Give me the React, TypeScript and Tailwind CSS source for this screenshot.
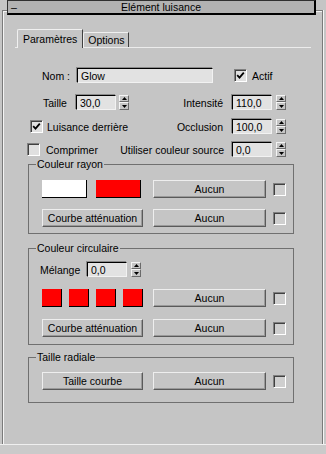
import React from 'react';

type Cls = { className?: string };

function Field({ value, className = '' }: { value: string } & Cls) {
    return (
        <div
            className={`h-[15px] shrink-0 pl-[3px] flex items-center bg-[#e2e2e2] border border-t-black border-l-black border-r-[#f2f2f2] border-b-[#f2f2f2] shadow-[-1px_-1px_0_#8a8a8a] ${className}`}
        >
            {value}
        </div>
    );
}

function Spinner({ className = '' }: Cls) {
    return (
        <div className={`w-[10px] h-[15px] shrink-0 flex flex-col ${className}`}>
            <div className="h-[7px] flex items-center justify-center border border-t-[#f4f4f4] border-l-[#f4f4f4] border-r-[#6a6a6a] border-b-[#6a6a6a]">
                <svg width="5" height="3" viewBox="0 0 5 3">
                    <polygon points="2.5,0 5,3 0,3" fill="#000" />
                </svg>
            </div>
            <div className="h-[8px] flex items-center justify-center border border-t-[#f4f4f4] border-l-[#f4f4f4] border-r-[#6a6a6a] border-b-[#6a6a6a]">
                <svg width="5" height="3" viewBox="0 0 5 3">
                    <polygon points="0,0 5,0 2.5,3" fill="#000" />
                </svg>
            </div>
        </div>
    );
}

function Check({ checked = false, dim = false, className = '' }: { checked?: boolean; dim?: boolean } & Cls) {
    return (
        <div
            className={`w-[13px] h-[13px] shrink-0 flex items-center justify-center border border-t-[#808080] border-l-[#808080] border-r-white border-b-white shadow-[inset_1px_1px_0_#404040] ${
                dim ? 'bg-[#cfcfcf]' : 'bg-[#e0e0e0]'
            } ${className}`}
        >
            {checked && (
                <svg width="9" height="9" viewBox="0 0 9 9">
                    <path d="M1.2 4.2 L3.5 6.6 L7.8 1.6" stroke="#000" strokeWidth="1.8" fill="none" />
                </svg>
            )}
        </div>
    );
}

function Btn({ children, className = '' }: { children: React.ReactNode } & Cls) {
    return (
        <div
            className={`h-[18px] shrink-0 flex items-center justify-center border border-t-[#eeeeee] border-l-[#eeeeee] border-r-[#5a5a5a] border-b-[#5a5a5a] shadow-[inset_-1px_-1px_0_#9a9a9a] ${className}`}
        >
            {children}
        </div>
    );
}

function Group({ title, children, className = '' }: { title: string; children: React.ReactNode } & Cls) {
    return (
        <fieldset className={`ml-[25px] w-[266px] border border-[#707070] ${className}`}>
            <legend className="ml-[7px] px-[1px] leading-[12px]">{title}</legend>
            {children}
        </fieldset>
    );
}

export default function App() {
    return (
        <div className="w-[326px] h-[454px] overflow-hidden bg-[#c5c5c5] text-[10.5px] leading-[12px] text-black flex flex-col font-['Liberation_Sans',Arial,sans-serif]">
            {/* rollout title */}
            <div className="relative z-10 ml-[7px] w-[309px] h-[15px] shrink-0 flex items-center bg-[#b2b2b2] border border-[#303030] border-r-2 border-b-2 border-r-black border-b-black">
                <span className="pl-[3px] w-[20px]">–</span>
                <span className="flex-1 text-center pr-[20px]">Elément luisance</span>
            </div>

            <div className="-mt-[5px] ml-[2px] w-[321px] h-[434px] shrink-0 border border-b-0 border-[#7a7a7a] shadow-[inset_1px_1px_0_#f4f4f4,1px_0_0_#f4f4f4] flex flex-col">
                {/* tabs */}
                <div className="mt-[18px] ml-[12px] w-[296px] h-[19px] flex items-end border-b border-[#ececec] pl-[2px]">
                    <div className="-mb-px h-[19px] px-[5px] flex items-center bg-[#c5c5c5] border-t border-l border-[#f0f0f0] border-r border-r-[#404040] rounded-tl-[2px]">
                        Paramètres
                    </div>
                    <div className="h-[15px] px-[4px] flex items-center border-t border-l border-[#f0f0f0] border-r border-r-[#404040] rounded-tl-[2px]">
                        Options
                    </div>
                </div>

                <div className="mt-[20px] flex items-center h-[15px]">
                    <span className="ml-[39px] w-[35px]">Nom :</span>
                    <Field value="Glow" className="w-[136px]" />
                    <Check checked className="ml-[21px]" />
                    <span className="ml-[5px]">Actif</span>
                </div>

                <div className="mt-[12px] flex items-center h-[15px] w-[283px]">
                    <span className="ml-[40px] w-[33px]">Taille</span>
                    <Field value="30,0" className="w-[40px]" />
                    <Spinner className="ml-[3px]" />
                    <span className="flex-1 text-right pr-[9px]">Intensité</span>
                    <Field value="110,0" className="w-[40px]" />
                    <Spinner className="ml-[4px]" />
                </div>

                <div className="mt-[9px] flex items-center h-[15px] w-[283px]">
                    <Check checked className="ml-[27px]" />
                    <span className="ml-[4px]">Luisance derrière</span>
                    <span className="flex-1 text-right pr-[9px]">Occlusion</span>
                    <Field value="100,0" className="w-[40px]" />
                    <Spinner className="ml-[4px]" />
                </div>

                <div className="mt-[8px] flex items-center h-[15px] w-[283px]">
                    <Check className="ml-[24px]" />
                    <span className="ml-[6px]">Comprimer</span>
                    <span className="flex-1 text-right pr-[8px]">Utiliser couleur source</span>
                    <Field value="0,0" className="w-[40px]" />
                    <Spinner className="ml-[4px]" />
                </div>

                <Group title="Couleur rayon" className="mt-[1px]">
                    <div className="pt-[10px] pl-[13px] pb-[6px] flex flex-col gap-[11px]">
                        <div className="flex items-center h-[18px]">
                            <div className="w-[45px] h-[18px] bg-white border-r border-b border-black" />
                            <div className="ml-[9px] w-[45px] h-[18px] bg-[#ff0000] border-r border-b border-black" />
                            <Btn className="ml-[12px] w-[113px]">Aucun</Btn>
                            <Check dim className="ml-[7px]" />
                        </div>
                        <div className="flex items-center h-[18px]">
                            <Btn className="w-[101px]">Courbe atténuation</Btn>
                            <Btn className="ml-[10px] w-[113px]">Aucun</Btn>
                            <Check dim className="ml-[7px]" />
                        </div>
                    </div>
                </Group>

                <Group title="Couleur circulaire" className="mt-[8px]">
                    <div className="pt-[8px] pl-[13px] pb-[7px] flex flex-col">
                        <div className="flex items-center h-[15px]">
                            <span className="-ml-[2px] w-[47px]">Mélange</span>
                            <Field value="0,0" className="w-[40px]" />
                            <Spinner className="ml-[4px]" />
                        </div>
                        <div className="mt-[12px] flex items-center h-[18px]">
                            <div className="flex gap-[7px]">
                                {[0, 1, 2, 3].map((i) => (
                                    <div key={i} className="w-[20px] h-[18px] bg-[#ff0000] border-r border-b border-black" />
                                ))}
                            </div>
                            <Btn className="ml-[10px] w-[113px]">Aucun</Btn>
                            <Check dim className="ml-[7px]" />
                        </div>
                        <div className="mt-[12px] flex items-center h-[18px]">
                            <Btn className="w-[101px]">Courbe atténuation</Btn>
                            <Btn className="ml-[10px] w-[113px]">Aucun</Btn>
                            <Check dim className="ml-[7px]" />
                        </div>
                    </div>
                </Group>

                <Group title="Taille radiale" className="mt-[6px]">
                    <div className="pt-[9px] pl-[13px] pb-[12px]">
                        <div className="flex items-center h-[18px]">
                            <Btn className="w-[101px]">Taille courbe</Btn>
                            <Btn className="ml-[10px] w-[113px]">Aucun</Btn>
                            <Check dim className="ml-[7px]" />
                        </div>
                    </div>
                </Group>
            </div>

            <div className="h-[10px] shrink-0 border-t border-[#efefef] bg-[#cacaca]" />
        </div>
    );
}
